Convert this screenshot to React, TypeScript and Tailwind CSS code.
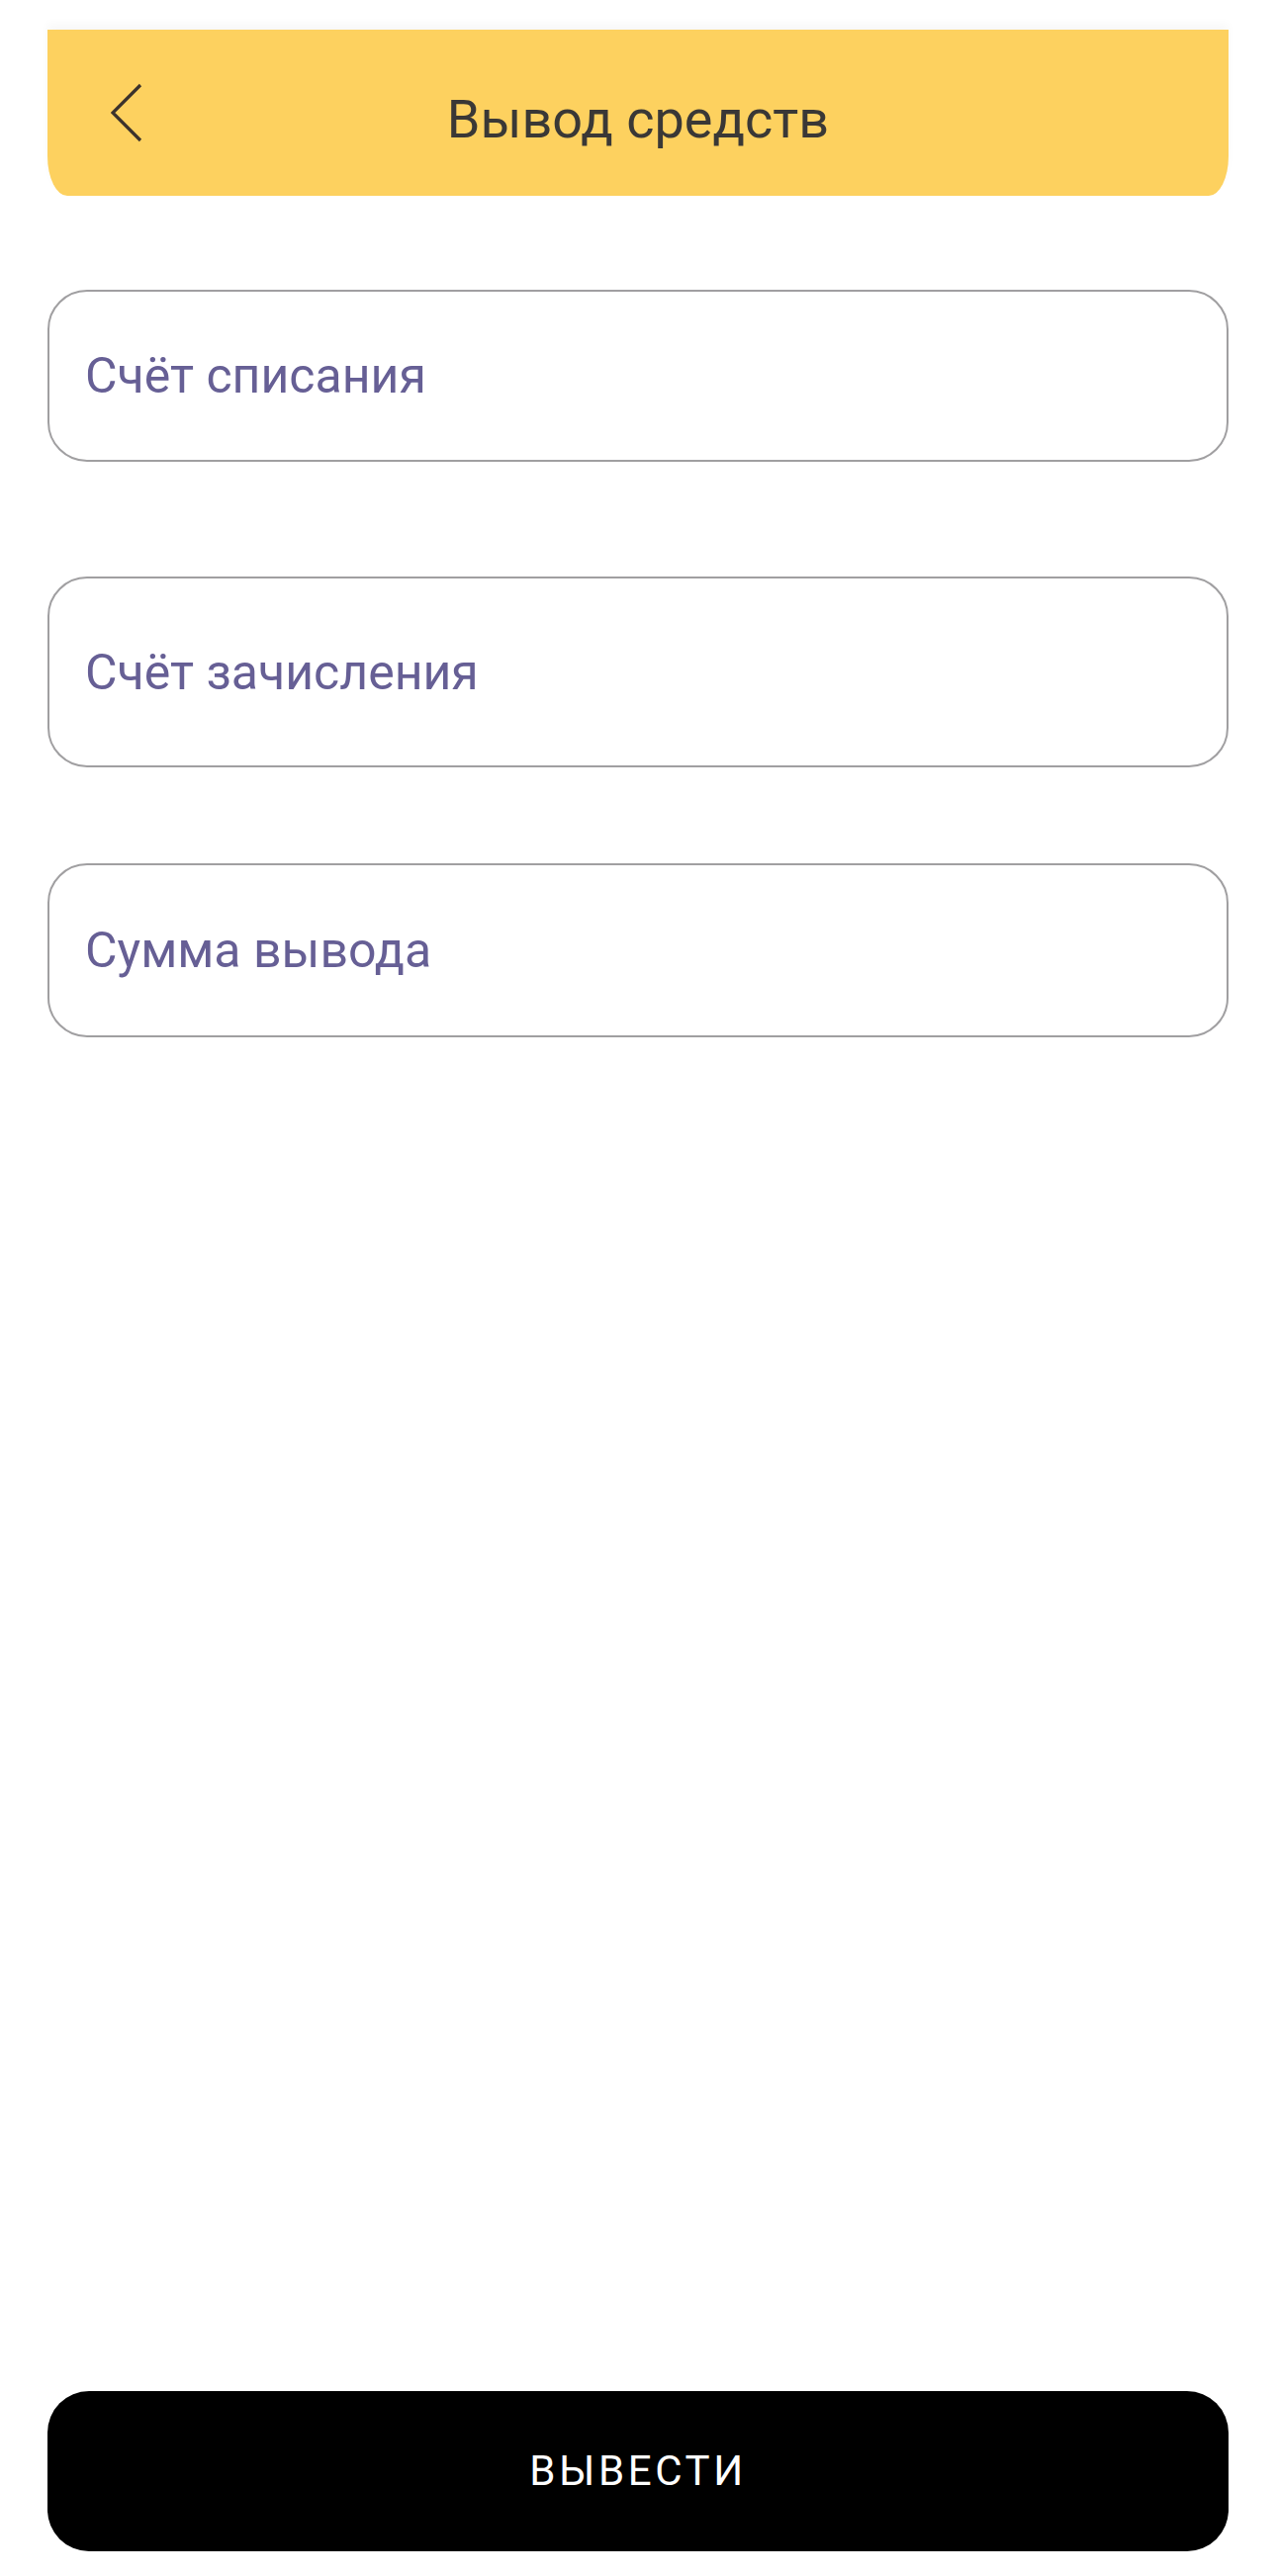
import { useState } from "react";

const fields = [
  { id: "from", label: "Счёт списания", height: "h-[174px]", gap: "mt-[95px]" },
  { id: "to", label: "Счёт зачисления", height: "h-[193px]", gap: "mt-[116px]" },
  { id: "amount", label: "Сумма вывода", height: "h-[176px]", gap: "mt-[97px]" },
];

function BackIcon() {
  return (
    <svg width="34" height="60" viewBox="0 0 34 60" fill="none">
      <path d="M30 2 L2 30 L30 58" stroke="#3b322c" strokeWidth="3.2" strokeLinecap="butt" strokeLinejoin="miter" />
    </svg>
  );
}

export default function App() {
  const [values, setValues] = useState<Record<string, string>>({});

  return (
    <div className="min-h-screen bg-white flex flex-col px-12 font-['Roboto','Noto_Sans',sans-serif]">
      {/* header */}
      <header className="mt-[30px] h-[168px] bg-[#fdd15f] rounded-bl-[20px_40px] rounded-br-[20px_40px] flex items-center shadow-[0_-6px_10px_rgba(0,0,0,0.03)]">
        <div className="w-[130px] pl-[64px] flex items-center">
          <button className="block">
            <BackIcon />
          </button>
        </div>
        <h1 className="flex-1 text-center text-[54px] leading-none text-[#3a3836] mt-[14px]">
          Вывод средств
        </h1>
        <div className="w-[130px]" />
      </header>

      {/* fields */}
      {fields.map((f) => (
        <label
          key={f.id}
          className={`${f.gap} ${f.height} flex items-center rounded-[40px] border-2 border-[#a09fa1] bg-white pl-[36px] pr-8`}
        >
          <input
            value={values[f.id] ?? ""}
            onChange={(e) => setValues({ ...values, [f.id]: e.target.value })}
            placeholder={f.label}
            className="w-full bg-transparent outline-none text-[50px] leading-none text-[#665f95] placeholder:text-[#665f95]"
          />
        </label>
      ))}

      <div className="flex-1" />

      {/* submit */}
      <button className="mb-[25px] h-[162px] w-full rounded-[42px] bg-black text-white text-[42px] leading-none tracking-[3.6px]">
        ВЫВЕСТИ
      </button>
    </div>
  );
}
